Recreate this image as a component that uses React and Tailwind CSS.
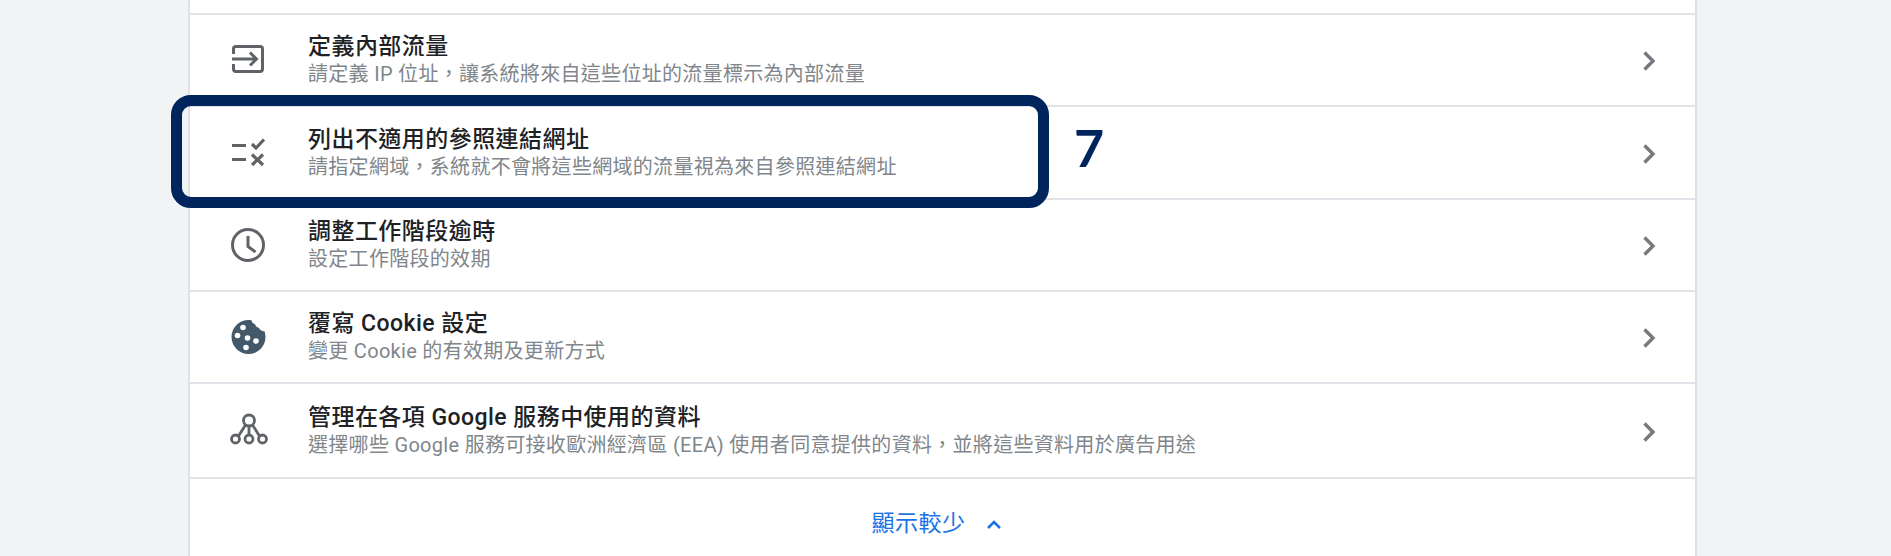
import React from 'react';

const sans = 'font-["Roboto","Noto_Sans_CJK_TC",sans-serif]';

const InputIcon = () => (
  <svg width="36" height="36" viewBox="0 0 36 36" fill="none" stroke="#5f6368" strokeWidth="3">
    <path d="M3.500 12V7A2.500 2.500 0 0 1 6 4.500h24A2.500 2.500 0 0 1 32.500 7v20a2.500 2.500 0 0 1-2.500 2.500H6A2.500 2.500 0 0 1 3.500 27v-5" />
    <path d="M2 17h24M20 10.500l6.500 6.500-6.500 6.500" />
  </svg>
);

const RuleIcon = () => (
  <svg width="36" height="36" viewBox="0 0 36 36" fill="none" stroke="#5f6368" strokeWidth="3.200">
    <path d="M2 10.500h14M2 24.500h14" />
    <path d="M22 9l4 4 8-8.500" />
    <path d="M22 19.500l11 10.500M33 19.500L22 30" />
  </svg>
);

const ClockIcon = () => (
  <svg width="36" height="36" viewBox="0 0 36 36" fill="none" stroke="#5f6368" strokeWidth="3">
    <circle cx="18" cy="18" r="15.500" />
    <path d="M18 9v10.500l7.500 5.500" />
  </svg>
);

const CookieIcon = () => (
  <svg width="36" height="36" viewBox="0 0 36 36">
    <path fill="#43596a" d="M18 1c1.500 0 2.500 0 3.500.300.300 2.500 2 3.500 3.500 3.700.5 2.500 2.300 3.700 4 3.700.7 2 2.500 3.500 5.700 3.800.3 1.800.8 3.500.8 5.500a17 17 0 1 1-17-17z" />
    <g fill="#fff">
      <circle cx="13" cy="8.500" r="2.800" />
      <circle cx="7.500" cy="16.500" r="2.800" />
      <circle cx="17.500" cy="19" r="2.800" />
      <circle cx="26" cy="22" r="2.800" />
      <circle cx="16" cy="28.500" r="2.800" />
    </g>
  </svg>
);

const TreeIcon = () => (
  <svg width="38" height="36" viewBox="0 0 38 36" fill="none" stroke="#5f6368" strokeWidth="2.800">
    <circle cx="19" cy="7.500" r="5.500" />
    <circle cx="5.500" cy="26" r="4" />
    <circle cx="19" cy="26" r="4" />
    <circle cx="32.500" cy="26" r="4" />
    <path d="M19 13v9M15.500 12L8.500 23M22.500 12L29.500 23" />
  </svg>
);

const Chevron = () => (
  <svg width="14" height="22" viewBox="0 0 14 22" fill="none" stroke="#757a7f" strokeWidth="3.400">
    <path d="M2.500 2.500l8.500 8.500-8.500 8.500" />
  </svg>
);

const rows = [
  { icon: <InputIcon />, title: '定義內部流量', sub: '請定義 IP 位址，讓系統將來自這些位址的流量標示為內部流量', h: 'h-[92px]' },
  { icon: <RuleIcon />, title: '列出不適用的參照連結網址', sub: '請指定網域，系統就不會將這些網域的流量視為來自參照連結網址', h: 'h-[93px]' },
  { icon: <ClockIcon />, title: '調整工作階段逾時', sub: '設定工作階段的效期', h: 'h-[92px]' },
  { icon: <CookieIcon />, title: '覆寫 Cookie 設定', sub: '變更 Cookie 的有效期及更新方式', h: 'h-[92px]' },
  { icon: <TreeIcon />, title: '管理在各項 Google 服務中使用的資料', sub: '選擇哪些 Google 服務可接收歐洲經濟區 (EEA) 使用者同意提供的資料，並將這些資料用於廣告用途', h: 'h-[95px]' },
];

const Row = ({ icon, title, sub, h }) => (
  <div className={`flex items-center border-b-2 border-[#e2e3e8] ${h}`}>
    <div className="flex w-[118px] shrink-0 justify-start pl-[40px]">{icon}</div>
    <div className="flex min-w-0 flex-1 flex-col">
      <div className="text-[23px] leading-[29px] font-medium tracking-[0.45px] text-[#202124]">{title}</div>
      <div className="text-[20px] leading-[27px] tracking-[0.3px] text-[#80868b]">{sub}</div>
    </div>
    <div className="mt-[2px] mr-[39px] shrink-0">
      <Chevron />
    </div>
  </div>
);

export default function App() {
  return (
    <div className={`h-[556px] w-full overflow-hidden bg-[#f1f3f5] ${sans}`}>
      <div className="relative ml-[188px] h-[556px] w-[1509px] border-x-2 border-[#dfe1e5] bg-white">
        <div className="h-[15px] border-b-2 border-[#e2e3e8]" />
        {rows.map(row => (
          <Row key={row.title} {...row} />
        ))}
        <div className="flex h-[77px] items-center justify-center gap-[20px] pt-[14px] pr-[12px] text-[23px] tracking-[0.5px] text-[#1a73e8]">
          <span>顯示較少</span>
          <svg width="16" height="10" viewBox="0 0 16 10" fill="none" stroke="#1a73e8" strokeWidth="2.600">
            <path d="M2 8l6-6 6 6" />
          </svg>
        </div>

        {/* callout drawn over the second row */}
        <div className="absolute top-[95px] left-[-19px] h-[113px] w-[878px] rounded-[20px] border-[11px] border-[#00255c]" />
        <div className="absolute top-[116px] left-[884px] font-['Lato',sans-serif] text-[52px] leading-[62px] font-bold text-[#00255c]">7</div>
      </div>
    </div>
  );
}
